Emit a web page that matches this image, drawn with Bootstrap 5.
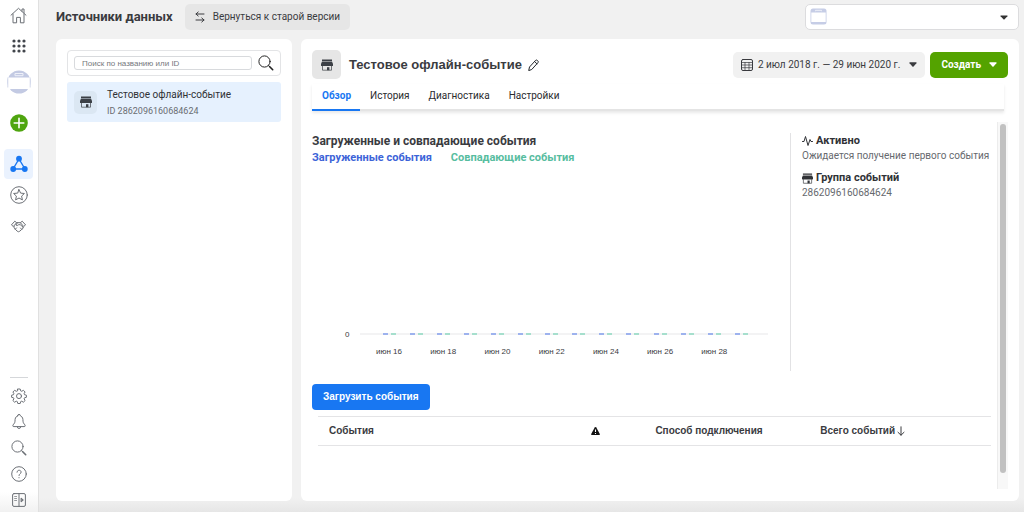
<!DOCTYPE html>
<html lang="ru">
<head>
<meta charset="utf-8">
<meta name="viewport" content="width=device-width, initial-scale=1">
<title>Источники данных</title>
<link href="https://cdn.jsdelivr.net/npm/bootstrap@5.3.0/dist/css/bootstrap.min.css" rel="stylesheet">
<style>
  :root { --ink: #3a3b3f; --muted-ink: #6a6d72; --brand: #1877f2; --line: #e4e4e6; }
  body { font-family: Roboto, "Liberation Sans", sans-serif; font-size: 10px; line-height: 14px; color: var(--ink);
    background: linear-gradient(to top, #e6e6e6, #f1f1f1 14px) #f1f1f1; }
  .arial { font-family: "Liberation Sans", Arial, sans-serif; }
  svg { display: block; flex: none; }
  .ico { fill: none; stroke: currentColor; stroke-width: 1; stroke-linecap: round; stroke-linejoin: round; }

  .rail { width: 39px; border-right: 1px solid #e0e0e0; background: linear-gradient(to top, #f1f1f1, #fff 20px); color: #6c7076; row-gap: 1px; padding-right: 1px; }
  .rail a { width: 29px; height: 30px; color: inherit; border-radius: 4px; }
  .rail a.current { background: #eaf2fe; color: var(--brand); }
  .rail .profile { margin-top: 5px; }
  .rail .create, .rail .current { margin-top: 10px; }
  .rail .tools { row-gap: 1px; }
  .rail .tools a { height: 25px; }
  .rail .rule { width: 18px; height: 1px; background: #d5d7da; margin-bottom: 4px; }

  .page { padding: 4px 5px 11px 17px; }
  .page-title { font-size: 13px; line-height: 26px; font-weight: 700; margin-right: 12px; }
  .btn-flat { font-size: 10px; line-height: 14px; height: 26px; padding: 0 10px; border-radius: 5px; background: #e6e6e6; color: var(--ink); border: 0; }
  .btn-flat:hover { background: #dcdcdc; }
  .account-box { width: 214px; }
  .account { height: 26px; font-size: 10px; padding: 0 24px 0 30px; border: 1px solid #dcdcde; border-radius: 5px;
    background: #fff url("data:image/svg+xml,%3Csvg xmlns='http://www.w3.org/2000/svg' viewBox='0 0 8 5'%3E%3Cpath d='M.8.5h6.4q.6.2.2.8L4.6 4.3q-.6.5-1.2 0L.6 1.3Q.2.7.8.5z' fill='%23333'/%3E%3C/svg%3E") no-repeat right 10px center / 8px 5px; }
  .account-mark { left: 5px; top: 4px; }

  .panels { margin-top: 9px; column-gap: 9px; }
  .panel { background: #fff; border-radius: 6px; }
  .sources { width: 236px; padding: 11px; }
  .search-box { height: 26px; border: 1px solid #e3e4e6; border-radius: 4px; padding: 0 6px; gap: 6px; }
  .search-box input { height: 14px; min-height: 0; font: 8px/12px "Liberation Sans", sans-serif; padding: 0 7px; border: 1px solid #d8dadd; border-radius: 3px; color: var(--muted-ink); }
  .search-box input::placeholder { color: #75787d; }
  .search-box button { color: #222; }
  .source { height: 40px; background: #e6f1fe; border-radius: 3px; padding: 0 7px; gap: 10px; margin-top: 6px; color: #303236; }
  .source small { font-size: 9px; line-height: 12px; color: var(--muted-ink); margin-top: 3px; }
  .tile { width: 23px; height: 23px; border-radius: 5px; background: #dbe7f3; color: #3c4046; }
  .tile-lg { width: 29px; height: 29px; background: #e6e6e6; }

  .detail { padding: 11px 11px 12px 11px; }
  .detail-title { font-size: 13px; line-height: 18px; font-weight: 700; margin-right: 6px; }
  .btn-date { background: #f1f1f1; padding: 0 8px; column-gap: 5px; }
  .date-caret { margin-left: 4px; }
  .btn-create { font-size: 10px; line-height: 14px; height: 26px; padding: 0 11px; border-radius: 5px; background: #54a300; border: 0; color: #fff; font-weight: 700; margin-left: 5px; }
  .btn-create:hover { background: #4a9000; color: #fff; }
  .tabs { border-bottom: 2px solid #e4e4e4; box-shadow: 0 2px 3px rgba(0,0,0,.09); margin: 5px 4px 0 0; }
  .tabs .nav-link { font-size: 10px; line-height: 14px; padding: 5px 9px 5px 10px; color: #2a2b2e; border-radius: 0; margin-bottom: -2px; border-bottom: 2px solid transparent; height: 27px; }
  .tabs .nav-link.active { color: var(--brand); font-weight: 700; background: none; border-color: var(--brand); }

  .body-row { margin-top: 11px; }
  .chart { padding-top: 11px; }
  .block-title { font-size: 12px; line-height: 16px; font-weight: 700; }
  .legend-row { font-size: 11px; line-height: 14px; font-weight: 700; margin-top: 2px; column-gap: 19px; }
  .up { color: #3c63d8; } .match { color: #57bd9f; }
  .plot { margin: 165px 22px 0 33px; font-size: 8px; line-height: 10px; column-gap: 11px; }
  .axis { height: 2px; background: #f3f3f4; margin-top: 3px; }
  .days { display: grid; grid-template-columns: repeat(14, 1fr); padding: 0 13px 0 15px; }
  .days div { display: flex; justify-content: center; white-space: nowrap; column-gap: 3px; }
  .days i { width: 5px; height: 2px; background: #9db2ee; }
  .days i + i { background: #a6dfcd; }
  .labels { margin-top: 12px; }
  .info { width: 201px; border-left: 1px solid #e2e2e4; padding: 1px 0 0 11px; margin-top: 11px; color: #66696e; min-height: 238px; }
  .info h3 { font-size: 11px; line-height: 14px; margin: 0; font-weight: 700; color: #303236; column-gap: 3px; }
  .info p { line-height: 15px; }
  .btn-load { font-size: 10px; line-height: 14px; height: 26px; padding: 0 11px; border-radius: 4px; background: var(--brand); border: 0; font-weight: 700; margin-top: 13px; }
  .events { margin: 6px 0 0 6px; width: calc(100% - 6px); table-layout: fixed; font-size: 10px; line-height: 14px; }
  .events th { padding: 7px 11px; border-top: 1px solid var(--line); border-bottom: 1px solid var(--line); color: var(--ink); background: none; font-weight: 700; }
  .events th span { column-gap: 2px; }
  .col-name { width: 39%; } .col-alert { width: 9.5%; } .col-way { width: 24.5%; }
  .track { width: 11px; background: #f8f8f8; border-left: 1px solid #ececec; padding: 2px 2px 16px; margin-left: 6px; }
  .thumb { width: 6px; border-radius: 3px; background: #c1c1c1; }
</style>
</head>
<body>
<svg width="0" height="0" class="position-absolute" aria-hidden="true">
  <symbol id="shop" viewBox="0 0 12 12">
    <path d="M1 .6h10v1.400H1zM1 2.600h10l1 2.400v1.400q0 .6-.6.6H.6q-.6 0-.6-.6V5z" fill="currentColor"/>
    <path d="M1.500 6.800v4.400h9V6.800" fill="none" stroke="currentColor" stroke-opacity=".7" stroke-width="1"/>
    <path d="M6 8.200h2.400v3H6z" fill="currentColor"/>
  </symbol>
  <symbol id="caret" viewBox="0 0 8 5"><path d="M.8.3h6.4q.7.2.2.9L4.6 4.4q-.6.5-1.2 0L.6 1.2Q.1.5.8.3z" fill="currentColor"/></symbol>
  <symbol id="lens" viewBox="0 0 16 16"><circle cx="6.500" cy="6.500" r="5.600"/><path d="M10.600 10.600l1 1"/><path d="M11.500 11.500l3.200 3.200" stroke-width="1.600"/></symbol>
</svg>
<div class="d-flex min-vh-100">
  <nav class="rail d-flex flex-column align-items-center flex-shrink-0" aria-label="Меню">
    <a href="#" class="d-flex align-items-center justify-content-center" aria-label="Главная">
      <svg class="ico" width="17" height="17" viewBox="0 0 17 17"><path d="M1 8.200L8.500 1.300 16 8.200M3 7v8.800h3.600v-5.400h3.800v5.400H14V7M12 4.200V2h2v4"/></svg>
    </a>
    <a href="#" class="d-flex align-items-center justify-content-center" aria-label="Все инструменты">
      <svg width="14" height="14" viewBox="0 0 14 14" fill="#42464c"><circle cx="2" cy="2" r="1.600"/><circle cx="7" cy="2" r="1.600"/><circle cx="12" cy="2" r="1.600"/><circle cx="2" cy="7" r="1.600"/><circle cx="7" cy="7" r="1.600"/><circle cx="12" cy="7" r="1.600"/><circle cx="2" cy="12" r="1.600"/><circle cx="7" cy="12" r="1.600"/><circle cx="12" cy="12" r="1.600"/></svg>
    </a>
    <a href="#" class="profile d-flex align-items-center justify-content-center" aria-label="Аккаунт">
      <svg width="24" height="24" viewBox="0 0 24 24"><circle cx="12" cy="12" r="11.500" fill="#c3cae3"/><path d="M1 7.500h22v11.500H1z" fill="#fff"/><path d="M.8 7.500v10M23.200 7.500v10" stroke="#c9cfe6" stroke-width=".8"/><path d="M8 3.500h8v2.200H8z" fill="none" stroke="#eef0f8" stroke-width="1"/></svg>
    </a>
    <a href="#" class="create d-flex align-items-center justify-content-center" aria-label="Создать">
      <svg width="18" height="18" viewBox="0 0 18 18"><circle cx="9" cy="9" r="8.800" fill="#4fa50f"/><path d="M9 4.200v9.600M4.200 9h9.600" stroke="#fff" stroke-width="1.600" stroke-linecap="round"/></svg>
    </a>
    <a href="#" class="current d-flex align-items-center justify-content-center" aria-label="Источники данных" aria-current="page">
      <svg width="18" height="18" viewBox="0 0 18 18"><path d="M9 4L3 14h12z" fill="none" stroke="currentColor" stroke-width="1.400"/><g fill="currentColor"><circle cx="9" cy="3.700" r="2.900"/><circle cx="3.200" cy="14" r="2.900"/><circle cx="14.800" cy="14" r="2.900"/></g></svg>
    </a>
    <a href="#" class="d-flex align-items-center justify-content-center" aria-label="Избранное">
      <svg class="ico" width="18" height="18" viewBox="0 0 18 18"><circle cx="9" cy="9" r="8.300"/><path d="M9 3.600l1.600 3.500 3.800.4-2.800 2.600.8 3.800L9 12l-3.400 1.900.8-3.800-2.800-2.600 3.800-.4z"/></svg>
    </a>
    <a href="#" class="d-flex align-items-center justify-content-center" aria-label="Партнёры">
      <svg class="ico" width="15" height="13" viewBox="0 0 15 13"><path d="M.7 4.600L3.800 1.200 5.600 2.700 2.600 6.200zM14.300 4.600L11.200 1.200 9.400 2.700 12.400 6.200zM5.600 2.700h3.800M6.600 2.700L4.800 5q1.300 1.200 2.900-.3h1.500L12.200 7.200M3 6.200Q2.600 8.200 4.300 9.200L6.200 11.200Q7.500 12.300 8.800 11.200L10.700 9.400Q12.600 8.600 12.200 7.200M4.300 9.200l1.200-1.300M10.700 9.400L9.500 8"/></svg>
    </a>
    <div class="tools d-flex flex-column align-items-center mt-auto">
      <div class="rule"></div>
      <a href="#" class="d-flex align-items-center justify-content-center" aria-label="Настройки">
        <svg class="ico" width="16" height="16" viewBox="0 0 16 16"><path d="M6.800 1h2.400l.5 1.900 1 .4 1.700-1 1.700 1.700-1 1.700.4 1 1.900.5v2.100l-1.900.5-.4 1 1 1.700-1.700 1.700-1.700-1-1 .4-.5 1.900H6.800l-.5-1.900-1-.4-1.700 1-1.700-1.700 1-1.700-.4-1L.6 9.300V7.200l1.900-.5.4-1-1-1.700 1.700-1.700 1.700 1 1-.4z"/><circle cx="8" cy="8.100" r="2.500"/></svg>
      </a>
      <a href="#" class="d-flex align-items-center justify-content-center" aria-label="Уведомления">
        <svg class="ico" width="14" height="16" viewBox="0 0 14 16"><path d="M5.600 1.800a1.400 1.400 0 0 1 2.800 0C10.800 2.800 11 5 11 7.200c0 2.400 2.200 3.200 2.200 4.600 0 .6-.4.800-1 .8H1.800c-.6 0-1-.2-1-.8C.8 10.400 3 9.600 3 7.200 3 5 3.200 2.800 5.600 1.800zM5.300 12.800a1.700 1.700 0 0 0 3.400 0"/></svg>
      </a>
      <a href="#" class="d-flex align-items-center justify-content-center" aria-label="Поиск"><svg class="ico" width="16" height="16"><use href="#lens"/></svg></a>
      <a href="#" class="d-flex align-items-center justify-content-center" aria-label="Справка">
        <svg class="ico" width="16" height="16" viewBox="0 0 16 16"><circle cx="8" cy="8" r="7.300"/><path d="M6 6.200c0-2.700 4.100-2.600 4.100-.1C10.100 7.800 8 7.700 8 9.500M8 11.600v.2"/></svg>
      </a>
      <a href="#" class="d-flex align-items-center justify-content-center" aria-label="Развернуть меню">
        <svg class="ico" width="14" height="14" viewBox="0 0 14 14"><rect x=".6" y=".6" width="12.800" height="12.800" rx="1.400"/><path d="M7 .8v12.400"/><path d="M2.600 3.500h2M2.600 5.500h2M2.600 7.500h2" stroke-width=".7"/><path d="M9.400 5.300l1.900 1.700-1.900 1.700z" fill="currentColor"/></svg>
      </a>
    </div>
  </nav>

  <main class="page flex-grow-1 d-flex flex-column">
    <header class="d-flex align-items-center">
      <h1 class="page-title mb-0">Источники данных</h1>
      <button type="button" class="btn btn-flat d-flex align-items-center">
        <svg class="ico me-2" width="10" height="12" viewBox="0 0 10 12"><path d="M9 3H1M3.200 1L1 3l2.200 2M1 9h8M6.800 7L9 9l-2.200 2"/></svg>Вернуться к старой версии
      </button>
      <div class="account-box position-relative ms-auto">
        <select class="form-select account" aria-label="Рекламный аккаунт"><option value=""></option></select>
        <svg class="account-mark position-absolute" width="17" height="17" viewBox="0 0 17 17"><rect x=".5" y=".5" width="16" height="16" rx="2.500" fill="#c6cde6"/><path d="M1.300 4.500h14.400v9.500H1.300z" fill="#fff"/><path d="M5.500 3.200V2.300h6v.9" fill="none" stroke="#eef0f8"/></svg>
      </div>
    </header>

    <div class="panels d-flex flex-grow-1">
      <aside class="panel sources flex-shrink-0">
        <form class="search-box d-flex align-items-center" role="search">
          <input type="text" class="form-control flex-grow-1" placeholder="Поиск по названию или ID" aria-label="Поиск по названию или ID">
          <button type="button" class="btn p-0 border-0" aria-label="Найти"><svg class="ico" width="16" height="16"><use href="#lens"/></svg></button>
        </form>
        <a href="#" class="source d-flex align-items-center text-decoration-none">
          <span class="tile d-flex align-items-center justify-content-center"><svg width="12" height="12"><use href="#shop"/></svg></span>
          <span><span class="d-block">Тестовое офлайн-событие</span><small class="d-block">ID 2862096160684624</small></span>
        </a>
      </aside>

      <section class="panel detail flex-grow-1 d-flex flex-column">
        <div class="d-flex align-items-center">
          <span class="tile tile-lg d-flex align-items-center justify-content-center"><svg width="12" height="12"><use href="#shop"/></svg></span>
          <h2 class="detail-title arial mb-0 ms-2">Тестовое офлайн-событие</h2>
          <button type="button" class="btn p-0 border-0" aria-label="Переименовать"><svg class="ico" width="11" height="12" viewBox="0 0 11 12"><path d="M.8 11.200l.7-3.200L7.600 1.400q.8-.8 1.700 0l.6.6q.8.800 0 1.700L4 10.200zM6.600 2.500l2.300 2.300"/></svg></button>
          <button type="button" class="btn btn-flat btn-date d-flex align-items-center ms-auto">
            <svg class="ico" width="12" height="12" viewBox="0 0 12 12"><rect x=".5" y=".5" width="11" height="11" rx="1.500"/><path d="M.5 3.500h11M.5 6h11M.5 8.700h11M4 3.500v8M8 3.500v8" stroke-width=".7"/></svg>2 июл 2018 г. — 29 июн 2020 г.<svg class="date-caret" width="8" height="5"><use href="#caret"/></svg>
          </button>
          <button type="button" class="btn btn-create d-flex align-items-center">Создать<svg class="ms-2" width="8" height="5"><use href="#caret"/></svg></button>
        </div>
        <nav class="tabs nav" aria-label="Разделы">
          <a class="nav-link active" aria-current="page" href="#">Обзор</a>
          <a class="nav-link" href="#">История</a>
          <a class="nav-link" href="#">Диагностика</a>
          <a class="nav-link" href="#">Настройки</a>
        </nav>

        <div class="body-row d-flex flex-grow-1">
          <div class="flex-grow-1">
            <div class="d-flex">
              <div class="chart flex-grow-1">
                <h3 class="block-title mb-0">Загруженные и совпадающие события</h3>
                <div class="legend-row d-flex"><span class="up">Загруженные события</span><span class="match">Совпадающие события</span></div>
                <div class="plot arial d-flex">
                  <span>0</span>
                  <div class="flex-grow-1">
                    <div class="axis days">
                      <div><i></i><i></i></div><div><i></i><i></i></div><div><i></i><i></i></div><div><i></i><i></i></div><div><i></i><i></i></div><div><i></i><i></i></div><div><i></i><i></i></div><div><i></i><i></i></div><div><i></i><i></i></div><div><i></i><i></i></div><div><i></i><i></i></div><div><i></i><i></i></div><div><i></i><i></i></div><div><i></i><i></i></div>
                    </div>
                    <div class="labels days">
                      <div>июн 16</div><div></div><div>июн 18</div><div></div><div>июн 20</div><div></div><div>июн 22</div><div></div><div>июн 24</div><div></div><div>июн 26</div><div></div><div>июн 28</div><div></div>
                    </div>
                  </div>
                </div>
              </div>
              <div class="info flex-shrink-0">
                <h3 class="d-flex align-items-center"><svg class="ico" width="11" height="12" viewBox="0 0 11 12"><path d="M.5 6.500H2L3.500 1.500l2.500 9L8 4.500l1 2h1.500"/></svg>Активно</h3>
                <p class="mb-2">Ожидается получение первого события</p>
                <h3 class="d-flex align-items-center"><svg width="11" height="11"><use href="#shop"/></svg>Группа событий</h3>
                <p class="mb-0">2862096160684624</p>
              </div>
            </div>
            <button type="button" class="btn btn-primary btn-load arial">Загрузить события</button>
            <table class="events arial">
              <colgroup><col class="col-name"><col class="col-alert"><col class="col-way"><col></colgroup>
              <thead><tr>
                <th scope="col">События</th>
                <th scope="col" aria-label="Предупреждения"><svg width="9" height="8" viewBox="0 0 9 8"><path d="M4.500 0Q5 0 5.300.5l3.500 6.400Q9.100 7.800 8.300 8H.7Q-.1 7.800.2 6.900L3.700.5Q4 0 4.500 0z" fill="#111"/><path d="M4.500 2.500v2.500M4.500 6v1" stroke="#fff" stroke-width="1.100"/></svg></th>
                <th scope="col">Способ подключения</th>
                <th scope="col"><span class="d-flex align-items-center">Всего событий<svg class="ico" width="8" height="10" viewBox="0 0 8 10"><path d="M4 .8v8.400M1 6.300l3 2.900 3-2.900"/></svg></span></th>
              </tr></thead>
            </table>
          </div>
          <div class="track d-flex flex-shrink-0" aria-hidden="true"><div class="thumb"></div></div>
        </div>
      </section>
    </div>
  </main>
</div>
<script src="https://cdn.jsdelivr.net/npm/bootstrap@5.3.0/dist/js/bootstrap.bundle.min.js"></script>
</body>
</html>
